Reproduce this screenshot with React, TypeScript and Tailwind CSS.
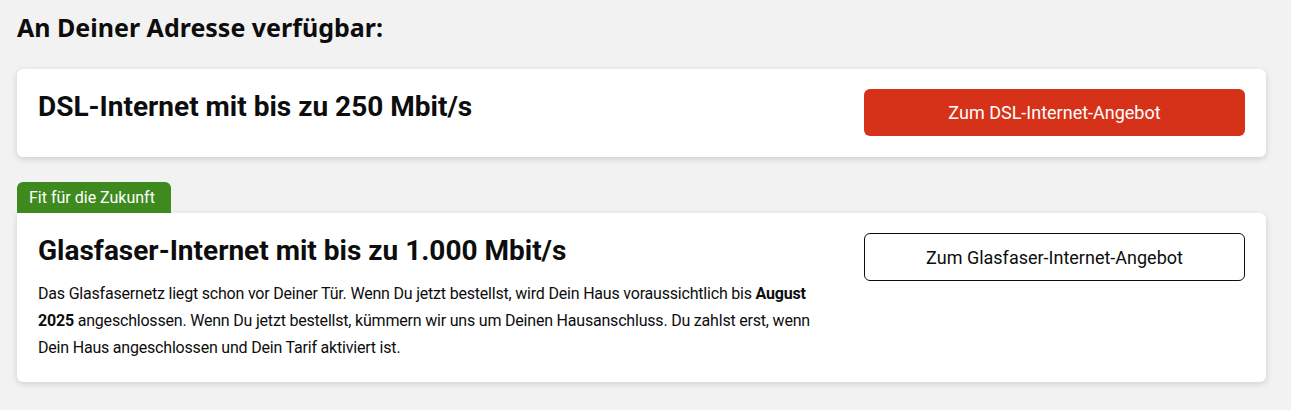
import React from "react";

export default function App() {
  return (
    <div className="min-h-[410px] w-full bg-[#f2f2f2] px-[17px] pt-[12px] text-[#0d0d0d] font-['Roboto',sans-serif]">
      <h1 className="text-[25px] font-bold leading-[30px] font-['Noto_Sans',sans-serif]">An Deiner Adresse verfügbar:</h1>
      <div className="mt-[27px] w-[1249px] h-[88px] bg-white rounded-[6px] shadow-[0_2px_6px_rgba(0,0,0,0.15)] flex justify-between pl-[21px] pr-[21px] pt-[20px]">
        <h2 className="text-[28px] font-bold leading-[36px]">DSL-Internet mit bis zu 250 Mbit/s</h2>
        <button className="w-[381px] h-[47px] rounded-[6px] bg-[#d6321a] text-white text-[18px]">Zum DSL-Internet-Angebot</button>
      </div>
      <div className="mt-[25px] inline-flex h-[31px] items-center pl-[12px] pr-[16px] bg-[#3f8a1e] text-white text-[16px] rounded-t-[6px]">Fit für die Zukunft</div>
      <div className="w-[1249px] h-[169px] bg-white rounded-b-[6px] rounded-tr-[6px] shadow-[0_2px_6px_rgba(0,0,0,0.15)] flex justify-between pl-[21px] pr-[21px] pt-[20px]">
        <div className="w-[792px]">
          <h2 className="text-[28px] font-bold leading-[36px]">Glasfaser-Internet mit bis zu 1.000 Mbit/s</h2>
          <p className="mt-[11px] text-[16px] leading-[27px] tracking-[-0.2px]">
            Das Glasfasernetz liegt schon vor Deiner Tür. Wenn Du jetzt bestellst, wird Dein Haus voraussichtlich bis <b>August 2025</b> angeschlossen. Wenn Du jetzt bestellst, kümmern wir uns um Deinen Hausanschluss. Du zahlst erst, wenn Dein Haus angeschlossen und Dein Tarif aktiviert ist.
          </p>
        </div>
        <button className="w-[381px] h-[48px] rounded-[6px] border-[1.5px] border-[#0d0d0d] bg-white text-[18px]">Zum Glasfaser-Internet-Angebot</button>
      </div>
    </div>
  );
}
